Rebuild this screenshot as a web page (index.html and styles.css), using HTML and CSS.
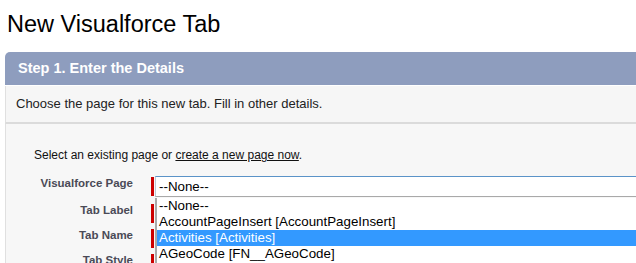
FILE: index.html
```html
<!DOCTYPE html>
<html>
<head>
<meta charset="utf-8" />
<title>New Visualforce Tab</title>
<link rel="stylesheet" href="styles.css">
</head>
<body>
<h1 class="pagetitle">New Visualforce Tab</h1>
<div class="panel">
    <div class="panelhead">Step 1. Enter the Details</div>
    <div class="paneldesc">Choose the page for this new tab. Fill in other details.</div>
    <div class="panelbody">
        <p class="intro">Select an existing page or <a href="#">create a new page now</a>.</p>
        <div class="row first">
            <div class="label">Visualforce Page</div>
            <div class="field">
                <span class="req"></span>
                <div class="selectwrap">
                    <div class="select">--None--</div>
                    <ul class="options">
                        <li>--None--</li>
                        <li>AccountPageInsert [AccountPageInsert]</li>
                        <li class="hover">Activities [Activities]</li>
                        <li>AGeoCode [FN__AGeoCode]</li>
                        <li>AlertPage [AlertPage]</li>
                    </ul>
                </div>
            </div>
        </div>
        <div class="row">
            <div class="label">Tab Label</div>
            <div class="field"><span class="req"></span><input type="text" value="" /></div>
        </div>
        <div class="row">
            <div class="label">Tab Name</div>
            <div class="field"><span class="req"></span><input type="text" value="" /></div>
        </div>
        <div class="row">
            <div class="label">Tab Style</div>
            <div class="field"><span class="req"></span><input type="text" value="" /></div>
        </div>
    </div>
</div>
</body>
</html>
```

FILE: styles.css
```css
html, body {
    margin:0;
    overflow:hidden;
}
body {
    font-family:"Liberation Sans", Arial, sans-serif;
    color:#222;
    background:#fff;
    width:760px;
}
.pagetitle {/*页面标题*/
    margin:0;
    padding:11px 0 0 7px;
    font-size:23.5px;
    font-weight:normal;
    line-height:26px;
    color:#000;
}
.panel {
    margin:15px 0 0 5px;
}
.panelhead {/*蓝灰色标题栏*/
    height:33px;
    line-height:33px;
    padding-left:13px;
    background:#8e9dbe;
    border-radius:5px 0 0 0;
    border-bottom:1px solid #fff;
    color:#fff;
    font-size:14.5px;
    font-weight:bold;
}
.paneldesc {
    background:#f6f6f6;
    border-left:1px solid #e0e0e0;
    border-bottom:2px solid #dbdbdb;
    padding:11px 0 11px 10px;
    font-size:13px;
    line-height:14px;
    color:#222;
}
.panelbody {
    background:#f7f7f7;
    border-left:1px solid #e0e0e0;
    padding:24px 0 20px 0;
}
.intro {
    margin:0 0 14px 28px;
    font-size:12px;
    line-height:14px;
    color:#111;
}
.intro a {
    color:#111;
    text-decoration:underline;
}
.row {
    display:flex;
    align-items:flex-start;
    height:21px;
    margin-bottom:4px;
}
.row.first {
    margin-bottom:6px;
}
.label {/*右对齐的字段名*/
    width:127px;
    margin-right:18px;
    text-align:right;
    font-size:11.5px;
    font-weight:bold;
    line-height:14px;
    color:#4a4a56;
}
.field {
    display:flex;
    align-items:flex-start;
}
.req {/*必填红条*/
    width:3px;
    height:19px;
    margin-top:1px;
    margin-right:1px;
    background:#c00;
}
.selectwrap {
    position:relative;
}
.select {
    width:520px;
    height:19px;
    line-height:19px;
    padding-left:3px;
    background:#fff;
    border:1px solid #bcc8d6;
    border-top-color:#5b93c8;
    border-bottom-color:#a9a9a9;
    font-size:13.333px;
    color:#000;
}
.options {/*展开的下拉列表*/
    position:absolute;
    left:0;
    top:22px;
    width:540px;
    margin:0;
    padding:0;
    list-style:none;
    background:#fff;
    border-left:2px solid #a9a9a9;
    font-size:13.333px;
    color:#000;
    z-index:2;
}
.options li {
    height:16px;
    line-height:16px;
    padding-left:2px;
    white-space:nowrap;
}
.options li.hover {
    background:#3399ff;
    color:#fff;
}
input {
    width:200px;
    height:19px;
    padding:0 3px;
    border:1px solid #a9a9a9;
    background:#fff;
}
```
